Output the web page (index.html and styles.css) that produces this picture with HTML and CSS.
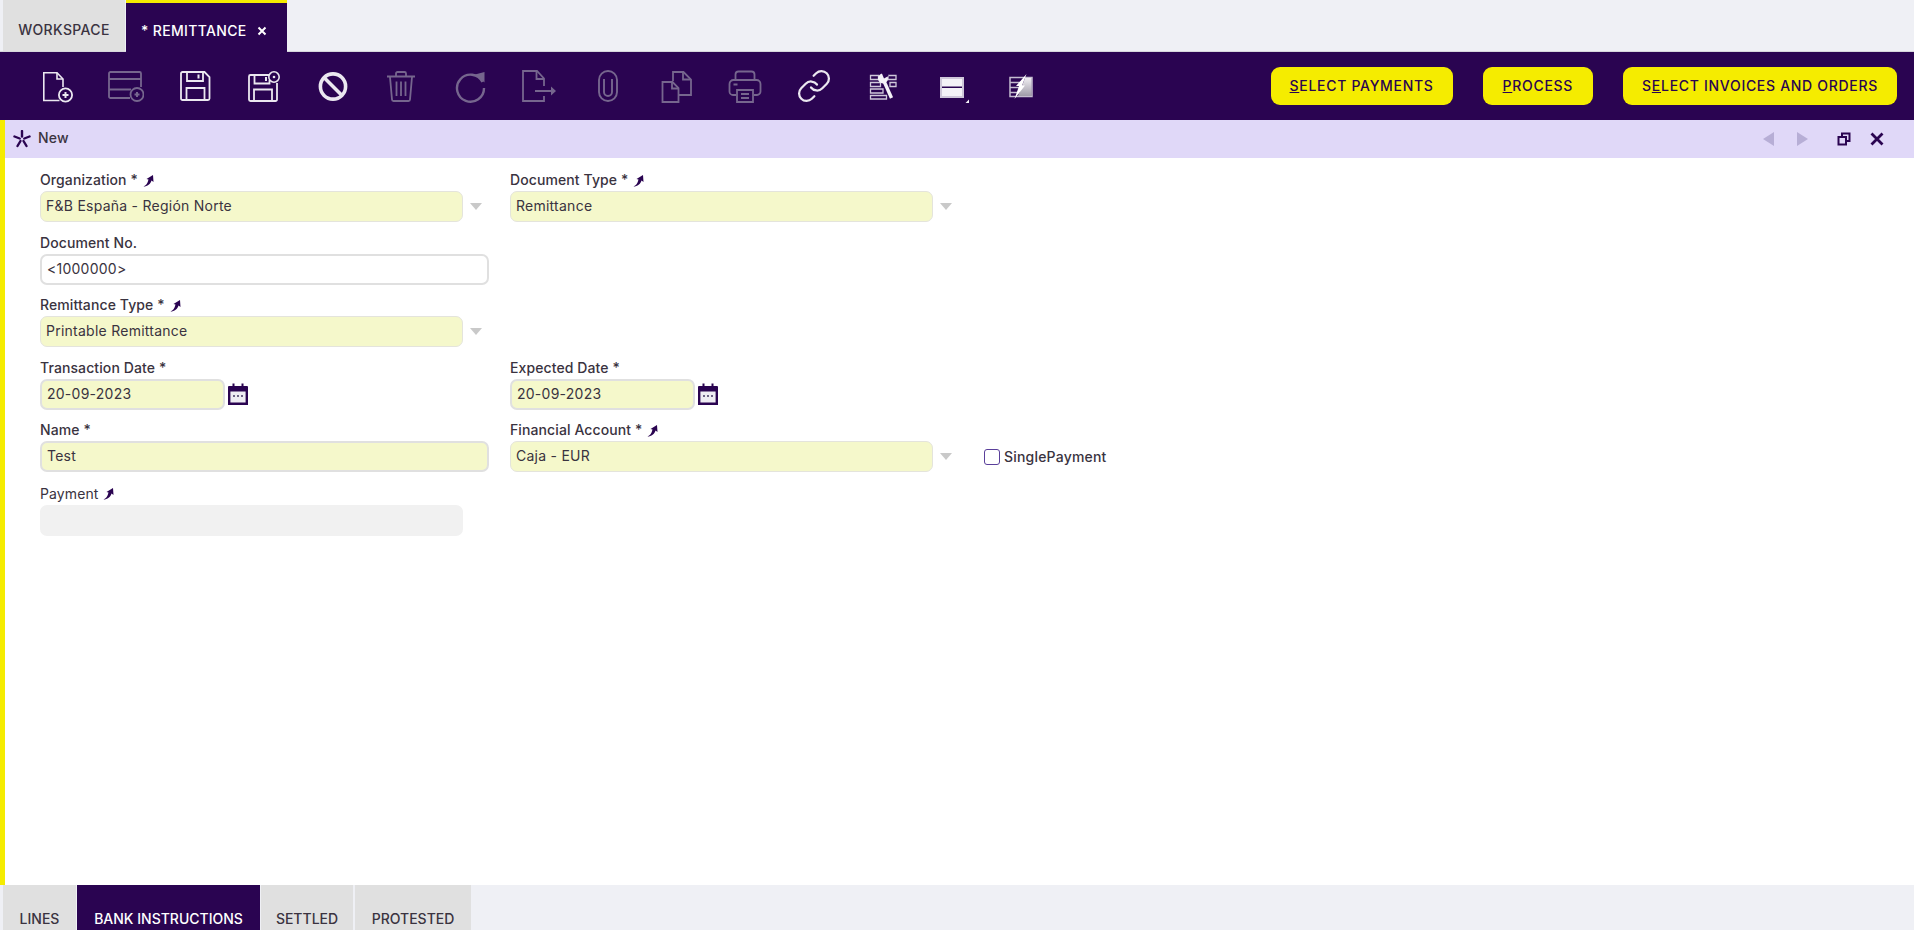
FILE: index.html
```html
<!DOCTYPE html>
<html lang="en">
<head>
<meta charset="UTF-8">
<title>Remittance</title>
<link rel="stylesheet" href="styles.css">
</head>
<body>

<!-- top tabs -->
<div class="tabs">
  <div class="tab">WORKSPACE</div>
  <div class="tab tab-active">* REMITTANCE
    <svg class="tab-close" width="10" height="10" viewBox="0 0 10 10"><path d="M1.5 1.5l7 7M8.5 1.5l-7 7" stroke="#fff" stroke-width="2"/></svg>
  </div>
</div>

<!-- toolbar -->
<div class="toolbar">
  <div class="tool"><svg width="36" height="36" viewBox="0 0 36 36" fill="none" stroke="currentColor" stroke-width="1.6"><path d="M20.5 32.5H4.8V4.8H18l6 6.2v8"/><path d="M18 4.8V11h6"/><circle cx="26.5" cy="27" r="6.6" stroke-width="1.8"/><path d="M23.5 27h6M26.5 24v6" stroke-width="2"/></svg></div>
  <div class="tool off"><svg width="36" height="36" viewBox="0 0 36 36" fill="none" stroke="currentColor" stroke-width="1.8"><path d="M22 30H2.500A1.500 1.500 0 0 1 1 28.500v-23A1.500 1.500 0 0 1 2.500 4h29A1.500 1.500 0 0 1 33 5.500V19"/><path d="M1 11h32M1 21.500h22"/><circle cx="29" cy="26.500" r="6.500"/><path d="M26.500 26.500h5M29 24v5" stroke-width="2"/></svg></div>
  <div class="tool"><svg width="36" height="36" viewBox="0 0 36 36" fill="none" stroke="currentColor" stroke-width="1.8"><path d="M5.500 4h22L32.500 9v21.500a1.500 1.500 0 0 1-1.500 1.500H5.500A1.500 1.500 0 0 1 4 30.500V5.500A1.500 1.500 0 0 1 5.500 4z"/><path d="M10 4v9h16V4M9.500 32V20h18v12"/><path d="M21.500 6.500v4" stroke-width="2"/></svg></div>
  <div class="tool"><svg width="36" height="36" viewBox="0 0 36 36" fill="none" stroke="currentColor" stroke-width="1.8"><path d="M23 7H4.500A1.500 1.500 0 0 0 3 8.500v23A1.500 1.500 0 0 0 4.500 33h25a1.500 1.500 0 0 0 1.500-1.500V15"/><path d="M8.500 7v8.500h15V12M8 33V21.500h18V33"/><path d="M20 9v4" stroke-width="2"/><circle cx="28" cy="9" r="5.200" stroke-width="1.6"/><circle cx="28" cy="9" r="1.300" fill="currentColor" stroke="none"/></svg></div>
  <div class="tool"><svg width="36" height="36" viewBox="0 0 36 36" fill="none" stroke="currentColor" stroke-width="3.600"><circle cx="18" cy="18.500" r="12.600"/><path d="M9 9.500l18 18"/></svg></div>
  <div class="tool off"><svg width="36" height="36" viewBox="0 0 36 36" fill="none" stroke="currentColor" stroke-width="1.800"><path d="M4 8.500h28M13 8V5.500A1.500 1.500 0 0 1 14.500 4h7A1.500 1.500 0 0 1 23 5.500V8"/><path d="M7 9l2 22.500a1.500 1.500 0 0 0 1.500 1.500h15a1.500 1.500 0 0 0 1.500-1.500L29 9"/><path d="M13.500 13.500V28M18 13.500V28M22.500 13.500V28"/></svg></div>
  <div class="tool off"><svg width="36" height="36" viewBox="0 0 36 36" fill="none" stroke="currentColor" stroke-width="2.400"><path d="M30.500 14A13.500 13.500 0 1 0 32 20"/><path d="M23 6.500l9.500-2.500v10.500z" fill="currentColor" stroke="none"/></svg></div>
  <div class="tool off"><svg width="36" height="36" viewBox="0 0 36 36" fill="none" stroke="currentColor" stroke-width="1.800"><path d="M23 18V10.500L16 3H2v30h21v-5"/><path d="M15.500 3.500v7.500H23"/><path d="M14 23h17" stroke-width="2"/><path d="M30 18.500l5 4.500-5 4.500z" fill="currentColor" stroke="none"/></svg></div>
  <div class="tool off"><svg width="36" height="36" viewBox="0 0 36 36" fill="none" stroke="currentColor" stroke-width="1.900"><path d="M9 12v12a9 9 0 0 0 18 0V12a9 9 0 0 0-18 0z"/><path d="M14 11v13a4 4 0 0 0 8 0V11"/></svg></div>
  <div class="tool off"><svg width="36" height="36" viewBox="0 0 36 36" fill="none" stroke="currentColor" stroke-width="1.800"><path d="M3.500 14h10l6 6v14h-16z"/><path d="M13 14.500V20.500h6.500"/><path d="M14 13V4h10.500l7.500 7.500v15.500H20"/><path d="M24 4.500V11.500h7.500"/></svg></div>
  <div class="tool off"><svg width="36" height="36" viewBox="0 0 36 36" fill="none" stroke="currentColor" stroke-width="1.800"><path d="M8.500 12V6.500a3 3 0 0 1 3-3h13a3 3 0 0 1 3 3V12"/><path d="M9 27H6a3.500 3.500 0 0 1-3.500-3.500V16A4 4 0 0 1 6.500 12h23a4 4 0 0 1 4 4v7.500A3.500 3.500 0 0 1 30 27h-3"/><path d="M10 22h16v12H10z"/><path d="M14 26h8M14 30h8M6.500 16.500h4"/></svg></div>
  <div class="tool"><svg width="36" height="36" viewBox="0 0 24 24" fill="none" stroke="currentColor" stroke-width="1.500" stroke-linecap="round"><path d="M10 13a5 5 0 0 0 7.540.54l3-3a5 5 0 0 0-7.070-7.070l-1.720 1.710"/><path d="M14 11a5 5 0 0 0-7.540-.54l-3 3a5 5 0 0 0 7.070 7.070l1.710-1.710"/></svg></div>
  <div class="tool"><svg width="36" height="36" viewBox="0 0 36 36" fill="none"><g stroke="#cfc8da" stroke-width="1.300"><path d="M5.500 7.500h8v4h-8zM23 7.500h8v4h-8zM5.500 14.500h10v4h-10zM25 14.500h6v4h-6zM5.500 21h12.500v4H5.500zM5.500 27.500h16v3.500h-16z"/></g><path d="M18.500 12l8 18" stroke="#f4f2f7" stroke-width="3.400"/><circle cx="18" cy="10.500" r="5" fill="#f4f2f7"/><path d="M16.500 4.500L19 10.500l4.500-2.500-1-4z" fill="#2a0451"/></svg></div>
  <div class="tool"><svg width="36" height="36" viewBox="0 0 36 36"><path d="M7 10h22v19H7z" fill="none" stroke="#cfc8da" stroke-width="2"/><path d="M8 11h20v7.500H8zM8 20h20v8H8z" fill="#f4f2f7"/><path d="M31.500 35l3.500-3.500V35z" fill="#f4f2f7"/></svg></div>
  <div class="tool"><svg width="36" height="36" viewBox="0 0 36 36"><defs><linearGradient id="flash-fade" x1="0" y1="0" x2="0" y2="1"><stop offset="0" stop-color="#f0eef2"/><stop offset="1" stop-color="#9f9ba8"/></linearGradient></defs><path d="M7 9.500h22v19H7z" fill="none" stroke="#c4bcd0" stroke-width="1.500"/><path d="M7 14.500h13M7 19.500h11M7 24.500h9" stroke="#c4bcd0" stroke-width="1.500"/><path d="M22 10h6.500v18H15z" fill="url(#flash-fade)"/><path d="M23.500 6l-4.500 11.500h3L11.500 31l4.500-13h-3z" fill="#fff"/></svg></div>
  <div class="actions">
    <div class="action"><u>S</u>ELECT PAYMENTS</div>
    <div class="action action-process"><u>P</u>ROCESS</div>
    <div class="action">S<u>E</u>LECT INVOICES AND ORDERS</div>
  </div>
</div>

<!-- record bar -->
<div class="record-bar">
  <svg class="new-icon" width="18" height="18" viewBox="0 0 18 18" stroke="#2a0451" stroke-linecap="round" fill="none"><path d="M9 1v5.500" stroke-width="2.400"/><path d="M1.500 6.500l5.200 2" stroke-width="2.400"/><path d="M16.500 6.500l-5.200 2" stroke-width="2.400"/><path d="M4.500 16l3-5" stroke-width="2.400"/><path d="M13.500 16l-3-5" stroke-width="2.400"/></svg>
  <span class="record-title">New</span>
  <div class="record-nav">
    <svg class="nav-arrow" width="11" height="14" viewBox="0 0 11 14"><path d="M11 0v14L0 7z" fill="#b7aed6"/></svg>
    <svg class="nav-arrow" width="11" height="14" viewBox="0 0 11 14"><path d="M0 0v14l11-7z" fill="#b7aed6"/></svg>
    <svg class="nav-restore" width="14" height="14" viewBox="0 0 14 14" fill="none" stroke="#2a0451" stroke-width="2"><path d="M1.500 5h7.500v7.500H1.500zM5 4.500V1.500h7.500V9H9.500"/></svg>
    <svg width="14" height="14" viewBox="0 0 14 14"><path d="M1.500 1.500l11 11M12.500 1.500l-11 11" stroke="#2a0451" stroke-width="2.800"/></svg>
  </div>
</div>

<!-- form -->
<div class="content">
  <div class="form">
    <div class="field">
      <label>Organization * <svg class="pin" width="11" height="13" viewBox="0 0 11 13"><path d="M.5 12.500C3 11.500 4.500 9.500 5.500 5.500L3.500 5 10 1l.5 7-2-1.500C7.500 10 4.500 12.500.5 12.500z"/></svg></label>
      <div class="select"><div class="input req">F&amp;B España - Región Norte</div><svg class="arrow" width="12" height="7" viewBox="0 0 12 7"><path d="M0 0h12L6 7z"/></svg></div>
    </div>
    <div class="field">
      <label>Document Type * <svg class="pin" width="11" height="13" viewBox="0 0 11 13"><path d="M.5 12.500C3 11.500 4.500 9.500 5.500 5.500L3.500 5 10 1l.5 7-2-1.500C7.500 10 4.500 12.500.5 12.500z"/></svg></label>
      <div class="select"><div class="input req">Remittance</div><svg class="arrow" width="12" height="7" viewBox="0 0 12 7"><path d="M0 0h12L6 7z"/></svg></div>
    </div>
    <div></div>

    <div class="field">
      <label>Document No.</label>
      <div class="input wide thick">&lt;1000000&gt;</div>
    </div>
    <div></div>
    <div></div>

    <div class="field">
      <label>Remittance Type * <svg class="pin" width="11" height="13" viewBox="0 0 11 13"><path d="M.5 12.500C3 11.500 4.500 9.500 5.500 5.500L3.500 5 10 1l.5 7-2-1.500C7.500 10 4.500 12.500.5 12.500z"/></svg></label>
      <div class="select"><div class="input req">Printable Remittance</div><svg class="arrow" width="12" height="7" viewBox="0 0 12 7"><path d="M0 0h12L6 7z"/></svg></div>
    </div>
    <div></div>
    <div></div>

    <div class="field">
      <label>Transaction Date *</label>
      <div class="date"><div class="input req thick short">20-09-2023</div><svg width="20" height="22" viewBox="0 0 20 22"><path d="M1.200 4.500h17.600v16.300H1.200z" fill="#eeecf3" stroke="#2a0451" stroke-width="2.400"/><path d="M1 3h18v5.500H1z" fill="#2a0451"/><path d="M4.500 0.500h2v4h-2zM13.500 0.500h2v4h-2z" fill="#2a0451"/><path d="M5 12h2v2H5zM9 12h2v2H9zM13 12h2v2h-2z" fill="#6d6385"/></svg></div>
    </div>
    <div class="field">
      <label>Expected Date *</label>
      <div class="date"><div class="input req thick short">20-09-2023</div><svg width="20" height="22" viewBox="0 0 20 22"><path d="M1.200 4.500h17.600v16.300H1.200z" fill="#eeecf3" stroke="#2a0451" stroke-width="2.400"/><path d="M1 3h18v5.500H1z" fill="#2a0451"/><path d="M4.500 0.500h2v4h-2zM13.500 0.500h2v4h-2z" fill="#2a0451"/><path d="M5 12h2v2H5zM9 12h2v2H9zM13 12h2v2h-2z" fill="#6d6385"/></svg></div>
    </div>
    <div></div>

    <div class="field">
      <label>Name *</label>
      <div class="input req wide thick">Test</div>
    </div>
    <div class="field">
      <label>Financial Account * <svg class="pin" width="11" height="13" viewBox="0 0 11 13"><path d="M.5 12.500C3 11.500 4.500 9.500 5.500 5.500L3.500 5 10 1l.5 7-2-1.500C7.500 10 4.500 12.500.5 12.500z"/></svg></label>
      <div class="select"><div class="input req">Caja - EUR</div><svg class="arrow" width="12" height="7" viewBox="0 0 12 7"><path d="M0 0h12L6 7z"/></svg></div>
    </div>
    <div class="check-cell"><span class="checkbox"></span><span class="check-label">SinglePayment</span></div>

    <div class="field field-last">
      <label class="label-off">Payment <svg class="pin" width="11" height="13" viewBox="0 0 11 13"><path d="M.5 12.500C3 11.500 4.500 9.500 5.500 5.500L3.500 5 10 1l.5 7-2-1.500C7.500 10 4.500 12.500.5 12.500z"/></svg></label>
      <div class="input disabled"></div>
    </div>
  </div>
</div>

<!-- child tabs -->
<div class="bottom-tabs">
  <div class="btab btab-lines">LINES</div>
  <div class="btab btab-active">BANK INSTRUCTIONS</div>
  <div class="btab btab-settled">SETTLED</div>
  <div class="btab btab-protested">PROTESTED</div>
</div>

</body>
</html>
```

FILE: styles.css
```css
* {
  margin: 0;
  padding: 0;
  box-sizing: border-box;
}

html, body {
  height: 100%;
}

body {
  display: flex;
  flex-direction: column;
  height: 930px;
  overflow: hidden;
  font-family: "Inter", "Noto Sans", sans-serif;
  font-size: 14px;
  color: #3a3340;
  background: #fff;
}

/* top tabs */
.tabs {
  display: flex;
  height: 52px;
  padding-left: 3px;
  background: #eff0f5;
  border-bottom: 1px solid #d6d6dc;
}

.tab {
  width: 122px;
  height: 51px;
  margin-right: 1px;
  padding-top: 13px;
  line-height: 34px;
  text-align: center;
  font-weight: 500;
  letter-spacing: 0.35px;
  background: #e0e0e0;
  color: #3a3340;
}

.tab-active {
  display: flex;
  align-items: center;
  gap: 10px;
  width: 161px;
  height: 52px;
  padding: 6px 0 0 15px;
  border-top: 3px solid #f5ec00;
  background: #2a0451;
  color: #fff;
}

/* toolbar */
.toolbar {
  display: flex;
  align-items: center;
  height: 68px;
  padding: 0 17px 0 23px;
  background: #2a0451;
}

.tool {
  display: flex;
  justify-content: center;
  align-items: center;
  width: 68.8px;
  color: #ebe8f0;
}

.tool.off {
  color: #76668e;
}

.actions {
  display: flex;
  gap: 30px;
  margin-left: auto;
}

.action {
  height: 38px;
  padding: 0 19px;
  line-height: 38px;
  border-radius: 9px;
  background: #f5ec00;
  color: #2a0451;
  font-weight: 500;
  letter-spacing: 0.7px;
  white-space: nowrap;
}

.action-process {
  padding: 0 20px;
}

/* record bar */
.record-bar {
  display: flex;
  align-items: center;
  height: 38px;
  padding-left: 13px;
  background: #e0d8f8;
  border-left: 5px solid #f5ec00;
}

.new-icon {
  margin-left: -5px;
}

.record-title {
  margin: -3px 0 0 7px;
  font-weight: 500;
  letter-spacing: 0.2px;
}

.record-nav {
  display: flex;
  align-items: center;
  margin-left: auto;
  padding-right: 30px;
}

.nav-arrow {
  margin-right: 23px;
}

.nav-restore {
  margin-right: 19px;
  margin-left: 6px;
}

/* form */
.content {
  flex: 1;
  padding: 12px 0 0 35px;
  border-left: 5px solid #f5ec00;
}

.form {
  display: grid;
  grid-template-columns: 470px 470px auto;
  grid-auto-rows: 62.5px;
}

.field label {
  display: flex;
  align-items: center;
  gap: 5px;
  height: 21px;
  padding-bottom: 2px;
  font-weight: 500;
  letter-spacing: 0.1px;
}

.field-last {
  margin-top: 1px;
}

.label-off {
  font-weight: 400 !important;
}

.pin {
  fill: #2a0451;
  margin-top: 1px;
}

.input {
  width: 423px;
  height: 31px;
  padding-left: 5px;
  line-height: 27px;
  letter-spacing: 0.25px;
  border: 1px solid #e4e4dc;
  border-radius: 7px;
  background: #fff;
}

.req {
  background: #f5f8cb;
}

.thick {
  padding-left: 5px;
  line-height: 25px;
  border: 2px solid #e0e0e0;
}

.wide {
  width: 449px;
}

.short {
  width: 185px;
}

.disabled {
  height: 31px;
  border: 0;
  background: #f1f1f1;
}

.select {
  display: flex;
  align-items: center;
}

.arrow {
  margin-left: 7px;
  fill: #c9c9c9;
}

.date {
  display: flex;
  align-items: center;
  gap: 3px;
}

.check-cell {
  display: flex;
  align-items: center;
  gap: 4px;
  height: 52px;
  padding: 21px 0 0 4px;
}

.checkbox {
  width: 16px;
  height: 16px;
  border: 1px solid #5a3f9a;
  border-radius: 3px;
  background: #fff;
}

.check-label {
  font-weight: 500;
  letter-spacing: 0.2px;
}

/* child tabs */
.bottom-tabs {
  display: flex;
  align-items: flex-end;
  height: 45px;
  padding-left: 3px;
  background: #eff0f5;
}

.btab {
  height: 45px;
  padding-top: 25px;
  line-height: 18px;
  text-align: center;
  font-weight: 500;
  letter-spacing: 0;
  background: #e0e0e0;
  color: #3a3340;
}

.btab-lines {
  width: 73px;
  margin-right: 1px;
}

.btab-active {
  width: 183px;
  margin-right: 1px;
  background: #2a0451;
  color: #fff;
}

.btab-settled {
  width: 92px;
  margin-right: 2px;
}

.btab-protested {
  width: 116px;
}
```
